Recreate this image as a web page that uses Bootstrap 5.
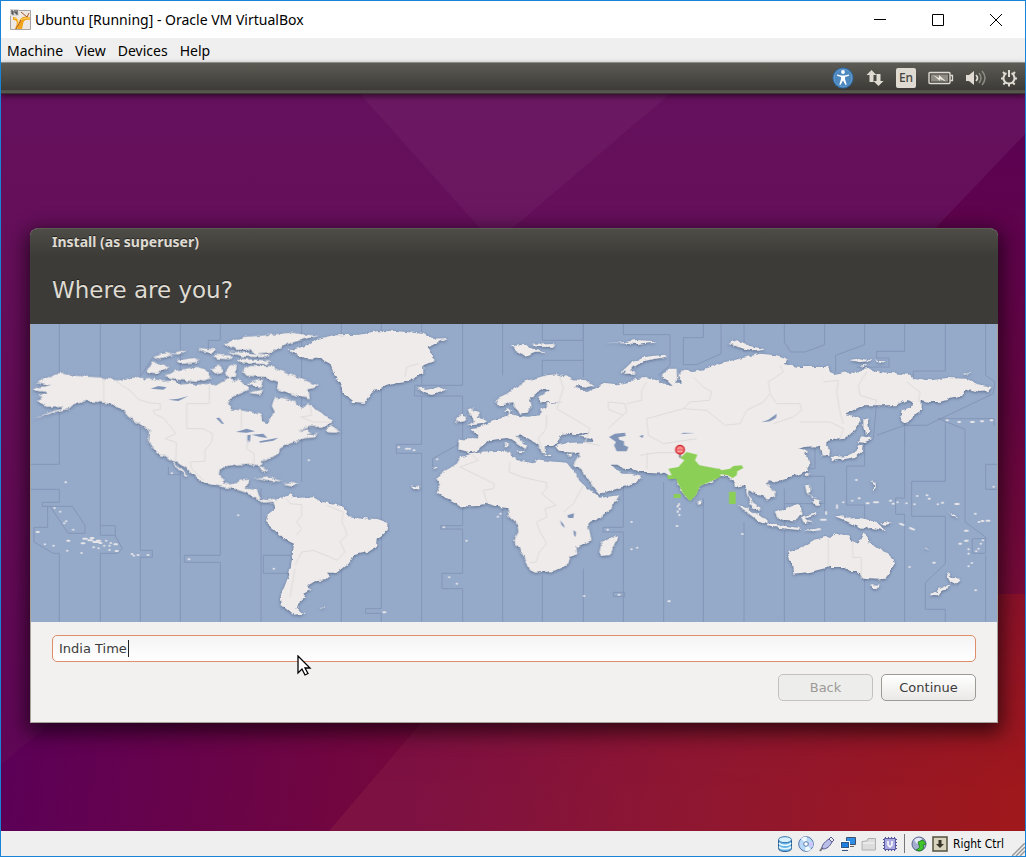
<!DOCTYPE html>
<html lang="en">
<head>
<meta charset="utf-8">
<meta name="viewport" content="width=device-width, initial-scale=1">
<title>Ubuntu [Running] - Oracle VM VirtualBox</title>
<link href="https://cdn.jsdelivr.net/npm/bootstrap@5.3.0/dist/css/bootstrap.min.css" rel="stylesheet">
<style>
  body { font-family: "Noto Sans", sans-serif; font-size: 14px; color: #000; border: 1px solid #1883d7; background: #efefef; }
  svg { display: block; flex: none; }
  .win-title { height: 37px; background: #fff; padding-left: 9px; }
  .win-title button { width: 58px; height: 36px; padding: 0; border: 0; background: none; display: flex; align-items: center; justify-content: center; color: #000; }
  .win-menu { height: 25px; border-bottom: 1px solid #a0a0a0; padding-left: 6px; gap: 12px; }
  .win-menu a { color: #000; text-decoration: none; }
  .panel { height: 31px; background: linear-gradient(#5c5b54, #3c3b37 90%, #56554e 92%); border-bottom: 1px solid #38362f; padding: 0 7px; gap: 12px; position: relative; box-shadow: 0 2px 6px rgba(0,0,0,.6); }
  .panel button { border: 0; padding: 0; background: none; }
  .panel .lang { width: 20px; height: 20px; border-radius: 2px; background: #dfdbd2; color: #45443f; font-size: 12px; line-height: 20px; font-weight: 500; }
  .desk { background: #65105a; padding: 134px 27px 24px 29px; position: relative; overflow: hidden; }
  .wall { position: absolute; inset: 0; width: 100%; height: 100%; }
  .installer { position: relative; border: 1px solid #a5a39a; border-top-color: #5c5b54; border-radius: 8px 8px 0 0; background: #f2f1f0; box-shadow: 0 6px 20px 4px rgba(0,0,0,.6); font-family: "DejaVu Sans", sans-serif; color: #3c3c3c; }
  .installer-head { height: 95px; margin: 0 -1px; padding: 0 22px; border-radius: 7px 7px 0 0; color: #dfdbd2; background: linear-gradient(#4d4c46, #3c3b37 28px); text-shadow: 0 -1px #22211e; }
  .installer-head h1 { font: 700 14px/26px "Noto Sans", sans-serif; margin: 0; }
  .installer-head h2 { font: 400 23px/30px "DejaVu Sans", sans-serif; margin: 20px 0 0; }
  .worldmap { width: 100%; height: auto; background: #95a9c9; }
  .installer-form { padding: 13px 21px 21px; }
  .tz { height: 27px; padding: 0 6px; border: 1px solid #df8d6b; border-radius: 5px; color: #3c3c3c; font-size: 13px; line-height: 25px; background: linear-gradient(#f4f4f4, #fff); caret-color: transparent; }
  .tz:focus { border-color: #df8d6b; box-shadow: none; color: #3c3c3c; }
  .caret { position: absolute; left: 76px; top: 5px; width: 1px; height: 17px; background: #222; }
  .pointer { position: absolute; left: 245px; top: 20px; }
  .gbtn { width: 95px; height: 27px; padding: 0; font-size: 13px; line-height: 25px; border: 1px solid #9b9a95; border-radius: 5px; color: #3c3c3c; background: linear-gradient(#fff, #eae9e7); }
  .gbtn:disabled { color: #9c9a96; background: #ededec; border-color: #c3c2c0; opacity: 1; }
  .win-status { height: 25px; padding-right: 21px; gap: 5px; font-family: "DejaVu Sans Condensed", "DejaVu Sans", sans-serif; font-size: 12px; position: relative; }
  .win-status .vr { margin: 3px 1px; opacity: .5; }
  .grip { position: absolute; right: 0; bottom: 0; }
</style>
</head>
<body class="d-flex flex-column min-vh-100">

<header class="win-title d-flex align-items-center">
  <svg width="21" height="21" viewBox="0 0 21 21"><path d="M.5 1.500h20v19H.5z" fill="#eee8e5" stroke="#a9a4a4"/><path d="M3 8c6 0 5 5 6 6 1-6 4-7 11-6v3c-8-1-6 3-8 9H5c3-7 2-9-2-9z" fill="#f2a41b"/><path d="M9 15c1-5 4-6 11-6M4 9c5 0 5 4 3 11" fill="none" stroke="#ffd76b"/><path d="M11 3l6 5 2-4M6 20l5-9" stroke="#a65723" fill="none"/><path d="M0 0h9v7H0z" fill="#d7d7d7"/><path d="M2 1v4h2M4 3H2M5 1v3h2M7 1v5" stroke="#333" fill="none"/></svg>
  <span class="ms-1 flex-grow-1 text-truncate">Ubuntu [Running] - Oracle VM VirtualBox</span>
  <button type="button" aria-label="Minimize"><svg width="12" height="12" viewBox="0 0 12 12"><path d="M0 5.500h12" stroke="#000"/></svg></button>
  <button type="button" aria-label="Maximize"><svg width="12" height="12" viewBox="0 0 12 12"><path d="M.5.500h11v11H.5z" stroke="#000" fill="none"/></svg></button>
  <button type="button" aria-label="Close"><svg width="12" height="12" viewBox="0 0 12 12"><path d="M0 0l12 12M12 0L0 12" stroke="#000"/></svg></button>
</header>

<nav class="win-menu d-flex align-items-center" aria-label="Machine window">
  <a href="#">Machine</a><a href="#">View</a><a href="#">Devices</a><a href="#">Help</a>
</nav>

<div class="panel d-flex align-items-center justify-content-end z-1">
  <button type="button" aria-label="Accessibility"><svg width="22" height="22" viewBox="0 0 22 22"><circle cx="11" cy="11" r="10.500" fill="#2f6ba6"/><circle cx="11" cy="11" r="9" fill="#4d88bf" stroke="#699fce"/><circle cx="11" cy="5" r="1.900" fill="#fff"/><path d="M5 7.500l4.500 1h3l4.500-1v1.300l-4 1.200V12l1.700 5.500-1.200.5L11 13.500 8.500 18l-1.200-.5L9 12v-2L5 8.800z" fill="#fff"/></svg></button>
  <button type="button" aria-label="Network"><svg width="18" height="18" viewBox="0 0 18 18" fill="#dfdbd2"><path d="M5.500 1l5 5H7.500v7h-4V6H.5zM12.500 17l-5-5h3V5h4v7h3z"/></svg></button>
  <button type="button" class="lang">En</button>
  <button type="button" aria-label="Battery"><svg width="26" height="14" viewBox="0 0 26 14"><rect x="1" y="1.500" width="21" height="11" rx="1" fill="none" stroke="#dfdbd2" stroke-width="1.400"/><path d="M3 3.500h17v7H3z" fill="#8e8c85"/><path d="M22.500 4.500h2v5h-2" fill="none" stroke="#dfdbd2" stroke-width="1.300"/><path d="M5 4l6 3V4l7 6.500-6-2.500v2z" fill="#eeeae0"/></svg></button>
  <button type="button" aria-label="Sound"><svg width="22" height="18" viewBox="0 0 22 18"><path d="M0 6h3l5-4v14l-5-4H0z" fill="#dfdbd2"/><path d="M10 6q3 3 0 6" fill="none" stroke="#dfdbd2" stroke-width="1.700"/><path d="M13 4q4 5 0 10M16 2q6 7 0 14" fill="none" stroke="#8e8c85" stroke-width="1.500"/></svg></button>
  <button type="button" aria-label="Session"><svg width="18" height="18" viewBox="0 0 18 18" fill="none" stroke="#dfdbd2" stroke-width="2"><path d="M6.500 4.200a5.500 5.500 0 1 0 5 0"/><path d="M9 1v7M3 3l2 2M15 3l-2 2M1 9.500h3M17 9.500h-3M3.300 15.500l2-2M14.700 15.500l-2-2M9 17.500V14.500"/></svg></button>
</div>

<main class="desk flex-grow-1">
  <svg class="wall" viewBox="0 0 1024 737" preserveAspectRatio="none" aria-hidden="true">
    <defs>
      <linearGradient id="w1" x1="0" y1="0" x2="0" y2="1"><stop offset="0" stop-color="#66115d"/><stop offset=".5" stop-color="#640b56"/><stop offset="1" stop-color="#5f0556"/></linearGradient>
      <linearGradient id="w2" gradientUnits="userSpaceOnUse" x1="0" y1="600" x2="1024" y2="737"><stop offset="0" stop-color="#5b0058"/><stop offset=".35" stop-color="#72063f"/><stop offset=".7" stop-color="#8b1030"/><stop offset="1" stop-color="#a0181a"/></linearGradient>
      <linearGradient id="w3" x1="0" y1="0" x2="0" y2="1"><stop offset="0" stop-color="#5b0252"/><stop offset=".4" stop-color="#640540"/><stop offset="1" stop-color="#8c122b"/></linearGradient>
      <linearGradient id="w4" gradientUnits="userSpaceOnUse" x1="420" y1="640" x2="1024" y2="737"><stop offset="0" stop-color="#7d1142"/><stop offset=".5" stop-color="#90172f"/><stop offset="1" stop-color="#9f181b"/></linearGradient>
      <linearGradient id="fade" x1="0" y1="0" x2="0" y2="1"><stop offset=".4" stop-color="#000"/><stop offset=".95" stop-color="#fff"/></linearGradient>
      <mask id="low"><path d="M0 0h1024v737H0z" fill="url(#fade)"/></mask>
    </defs>
    <path d="M0 0h1024v737H0z" fill="url(#w1)"/>
    <path d="M359 0h310L493 150z" fill="#fff" opacity=".035"/>
    <path d="M1024 40v697H700V380z" fill="url(#w3)"/>
    <path d="M0 671L320 400h380v337H0z" fill="url(#w2)"/>
    <path d="M328 737L530 500h494v237z" fill="url(#w4)" mask="url(#low)"/>
  </svg>

  <section class="installer">
    <header class="installer-head">
      <h1>Install (as superuser)</h1>
      <h2>Where are you?</h2>
    </header>

    <svg class="worldmap" viewBox="3 6 2898 894" role="img" aria-label="World time zone map">
      <defs>
        <filter id="coast" filterUnits="userSpaceOnUse" x="3" y="6" width="2898" height="894" color-interpolation-filters="sRGB">
          <feTurbulence type="fractalNoise" baseFrequency=".05" numOctaves="3" seed="4" result="n"/>
          <feDisplacementMap in="SourceGraphic" in2="n" scale="14" xChannelSelector="R" yChannelSelector="G" result="d"/>
          <feDropShadow in="d" dx="0" dy="3" stdDeviation="5" flood-color="#3f5070" flood-opacity=".65"/>
        </filter>
      </defs>
      <!-- time zone boundaries -->
      <g fill="none" stroke="#8496b8" stroke-width="3">
        <path d="M88 6V427H3M3 502H88V541H37V553H127L165 610V634H115L60 553M53 553V616H12V660L70 694H88V900M211 6V611H256V642L277 680 264 694H211V900M211 611V640H256M331 160V6M331 163L370 105M331 170V685H367V706H331V900M451 6V900M415 434V458H451M571 6V55H535V90M571 480V700H463V721H571V900M693 500V900M700 700H790M700 700V754H780M815 6V480M934 6V80M934 190V900M1054 6V30M1054 200V860H1007V874H1054V900"/>
        <path d="M1175 6V190H1154V222H1175V367H1099V394H1175V900M1298 6V190H1175M1175 222H1298V350M1298 360L1208 410V440M1298 550V611H1232V621H1298V754H1236V800H1298V900M1418 6V160M1418 560V900M1537 6V55H1660V6M1537 160V115H1660M1660 6V165M1537 760V900M1660 740V900M1780 6V38H1920V130L1885 160M1780 480V616H1719V630H1780V900M1780 811H1750V824H1784V811"/>
        <path d="M2020 6V47H1960V128H2000L2073 95V6M1901 480V900M2020 530V900M2142 6V90M2142 600V900M2263 6V60L2282 90H2325L2384 68V6M2263 500V900M2384 640V900M2504 6V68L2417 100V150M2504 770V900M2624 6V88H2540V108H2577V135H2480M2624 260V370M2540 340L2624 310H2690L2890 215 2895 180 2867 160V6M2746 6V147H2650V165M2504 290V432H2450V549H2504V590M2540 240L2530 350 2490 380M2725 290H2892V312M2725 290L2805 322V600L2867 645V694H2827V650H2867M2746 300V478H2645V583H2746V725L2686 782V862H2746V900M2624 330V528H2597V577H2624V900M2901 427H2867V502H2901M2867 700V900M2384 580V463H2320M2355 370V440H2340M2384 480V545H2263"/>
      </g>
      <g filter="url(#coast)" fill="#eeebea">
        <!-- North America -->
        <path d="M8 203L20 197 62 190 20 180 60 165 70 158 100 155 130 161 210 166 262 175 290 170 332 164 345 172 370 170 400 178 430 175 445 185 475 182 500 188 530 186 560 190 575 182 595 168 612 180 625 172 640 185 655 195 650 205 620 218 600 232 595 248 605 262 635 265 660 270 692 278 698 298 715 303 722 285 735 272 725 252 735 228 760 228 795 240 820 258 835 243 860 265 885 280 908 292 905 305 875 315 840 315 800 328 830 322 842 330 832 338 865 336 850 346 820 350 800 360 770 368 750 380 745 395 720 410 695 418 690 430 712 445 706 453 695 445 686 430 660 426 620 428 590 432 572 440 570 460 580 480 600 487 620 482 630 475 658 472 650 485 645 500 680 503 690 528 710 535 730 530 750 540 740 560 730 540 700 542 680 528 640 510 610 500 575 495 540 488 510 480 505 470 470 440 440 418 430 420 450 440 475 462 465 460 440 438 425 418 410 405 385 397 365 378 357 360 360 325 340 315 320 303 295 285 275 262 255 250 225 243 170 237 150 243 130 248 115 262 90 265 60 275 5 290 85 262 100 252 50 255 20 235 40 225 25 222 50 210 12 206Z"/>
        <path d="M350 150L365 122 400 125 418 135 380 155ZM370 105L410 92 425 100 380 112ZM415 95L475 83 450 97ZM400 165L440 145 500 135 520 140 530 150 545 170 500 180 430 172ZM440 115L490 108 508 120 455 126ZM505 78L560 82 545 94 515 86ZM550 98L610 100 600 112 560 110ZM540 140L570 130 580 150 555 154ZM585 155L600 125 620 130 618 165 590 168ZM620 110L720 115 715 127 640 124ZM580 65L640 45 700 40 780 32 865 42 810 55 760 70 730 90 680 95 660 82 620 84ZM590 88L650 92 720 98 712 106 640 104ZM635 145L660 132 720 132 760 150 810 168 865 192 835 203 840 232 790 218 740 200 745 180 700 165 650 162ZM655 212L700 202 690 218ZM650 185L700 170 690 200ZM885 320L905 310 932 330 895 328Z"/>
        <path d="M675 467L710 463 760 478 720 477ZM760 485L785 480 805 485 785 491Z"/>
        <!-- Greenland and South America -->
        <g transform="translate(660)">
          <path d="M112 85L150 78 190 60 205 50 250 40 330 38 380 28 440 27 520 35 545 50 595 48 560 62 530 75 550 100 550 118 520 130 520 155 470 180 430 185 370 205 345 243 310 240 280 215 265 180 250 150 240 125 215 112 165 108Z"/>
          <path d="M75 540L90 528 120 515 130 528 190 526 215 540 255 545 280 555 295 572 290 582 340 588 385 592 415 603 415 618 395 640 380 650 378 675 355 690 310 700 300 720 260 752 228 752 240 765 230 775 195 778 175 790 180 805 160 815 168 825 145 845 140 860 168 875 130 878 95 850 92 820 105 790 118 755 125 720 132 665 100 650 80 630 45 600 50 580 75 560Z"/>
          <path d="M207 855L230 853 220 858ZM480 490L515 495 505 506Z"/>
        </g>
        <!-- Europe, Arabia and Africa -->
        <g transform="translate(1140)">
          <path d="M147 352L205 352 208 342 180 322 205 318 225 308 265 290 290 285 300 270 283 270 290 262 305 264 302 275 325 282 355 284 390 280 392 262 410 255 410 243 458 242 395 240 388 225 420 205 400 202 370 218 358 235 362 255 350 272 328 275 318 262 305 240 290 248 262 250 258 230 290 215 320 195 345 178 380 168 410 160 440 157 465 163 490 172 530 175 550 190 530 197 495 192 510 205 535 210 570 192 580 185 620 190 650 180 690 178 750 170V450H690L660 440 640 440 622 428 605 428 620 445 640 455 665 455 695 465 680 480 640 495 568 515 555 500 530 465 505 435 490 428 505 405 505 392 450 390 435 372 480 362 552 360 545 352 505 342 535 330 520 330 490 340 485 332 460 335 448 350 445 362 425 372 405 372 405 395 390 390 385 370 350 350 335 340 318 342 325 352 355 370 350 385 330 370 305 352 290 348 240 355 215 372 200 390 178 394 145 385Z"/>
          <path d="M170 398L205 392 250 390 300 388 305 405 340 418 375 425 380 412 420 418 470 422 485 440 500 460 520 490 540 510 565 520 570 527 628 520 605 560 570 585 540 600 535 610 545 655 500 675 502 697 480 705 470 730 430 748 375 752 360 745 345 710 312 655 325 630 322 605 295 580 292 558 265 555 230 545 190 553 155 553 130 540 100 525 80 510 92 485 82 470 100 450 140 425 150 408Z"/>
          <path d="M568 690L575 660 605 645 615 638 622 650 600 700 570 702ZM173 262L192 256 188 265 205 270 208 285 230 295 222 306 175 310 195 295 180 280ZM138 290L155 278 172 282 165 298 140 302ZM22 200L40 197 50 203 90 195 108 207 65 219 40 213ZM303 72L345 68 370 82 412 92 375 92 350 104 315 85ZM365 68L435 66 430 74 385 75ZM285 360h8v16h-8zM320 385h24l-2 5h-18zM400 398h25v4h-22zM468 398l20-4-6 8zM68 434h15l-5 6z"/>
        </g>
        <!-- Asia -->
        <g transform="translate(1710)">
          <path d="M100 172L140 168 180 180 200 192 215 190 185 160 200 140 230 140 232 170 225 185 245 185 235 160 245 145 275 150 310 145 350 125 400 115 440 105 480 95 530 100 565 112 555 130 600 135 660 135V372L620 374 595 380 625 390 612 395 630 420 620 445 600 455 545 472 530 480 510 475 498 485 525 510 525 522 500 533 490 520 465 515 450 505 445 520 460 545 485 560 480 570 455 555 440 515 432 490 405 495 400 480 380 465 360 460 340 478 300 492 290 515 270 537 250 515 232 480 230 470 205 470 205 458 190 452 110 448Z"/>
          <path d="M62 152L80 145 75 158 105 158 92 142 130 118 200 104 195 98 130 105 90 125ZM385 62L415 55 450 72 495 82 470 88 420 78ZM12 60L60 62 110 54 170 58 110 66 60 64ZM290 535L300 532 306 545 295 549ZM413 548L430 553 470 575 500 595 500 607 475 598 450 578ZM500 607L560 612 600 618 595 624 540 618 500 613ZM525 570L550 565 590 545 600 555 605 575 590 595 550 595 530 585ZM603 585L630 578 650 572 648 577 620 588 642 605 625 598 620 608 610 600ZM615 490L630 488 632 510 620 515ZM635 540L655 533 662 548 645 548ZM615 460L628 453 622 468ZM626 512L652 530 640 525ZM610 622L660 622 640 628Z"/>
        </g>
        <!-- Far East and Oceania -->
        <g transform="translate(2250)">
          <path d="M0 130L60 135 145 135 150 150 168 158 190 152 230 152 240 145 270 140 300 150 390 158 400 168 450 175 500 168 560 170 590 185 635 195 625 208 600 210 560 200 550 215 545 225 510 230 480 240 445 240 425 235 425 265 400 280 385 300 370 305 360 285 365 265 395 255 400 240 380 235 345 250 250 250 220 265 198 275 240 290 242 300 225 325 195 350 150 355 138 365 150 385 148 402 125 400 120 375 85 370 55 378 85 390 70 395 88 420 80 445 50 460 0 470Z"/>
          <path d="M250 290L262 285 268 325 255 340 250 315ZM232 360L248 343 278 350 250 362ZM235 370L248 368 245 390 225 405 155 418 155 405 200 402 228 388ZM212 115L235 108 280 116 240 120ZM238 130h25l-10 6zM283 116l38 2-20 5zM545 155l30-2-20 5z"/>
          <path d="M22 690L60 680 100 655 135 645 150 648 165 635 208 640 205 652 235 665 250 632 262 640 270 665 310 685 340 710 345 725 335 745 315 770 290 773 250 770 230 750 210 750 190 735 150 735 90 750 40 755 35 725ZM272 787L300 788 288 803 278 798ZM165 583L190 580 195 590 240 587 290 600 318 628 280 618 245 620 215 605 190 593ZM500 752L520 768 543 770 525 788 510 780ZM510 787L500 800 470 820 447 820 480 800ZM302 605L325 600 338 602 320 608ZM100 530L122 535 118 546 105 542ZM80 512L100 522 88 518ZM498 562L512 575 535 588 520 586ZM430 678L452 687 440 684ZM272 475L283 480 285 495 278 508 280 492Z"/>
        </g>
      </g>
      <!-- small islands -->
      <g fill="none" stroke="#e6e5e8" stroke-width="6" stroke-linecap="round">
        <path d="M73 558h1M90 569h1M108 598h1M102 604h1M129 623h1M20 630h6M44 667h1M70 671h1M112 656h6M111 686h1M154 693h1M155 664h8M160 650h10M175 655h12M182 648h8M190 660h14M200 656h10M208 663h6M190 676h2M205 679h1M222 671h1M228 656h1M238 684h1M238 671h1M242 663h1M253 667h8M257 687h6M305 696h2M311 701h1M323 699h2M353 699h2M476 712h2M106 481h2M425 454h1M624 580h1M836 415h1M731 740h1"/>
        <path d="M1105 376h2M1128 380h4M1138 380h2M1151 385h2M1221 412h1M1241 616h1M1309 656h1M1257 766h1M1280 785h1M1411 575h1M1403 584h1M1804 600h1M1732 623h2M1804 682h1M1821 677h1M1766 818h2M1662 822h1M1947 546v2M1943 552v2M1949 560v2M1943 568v2M1948 578v2M1940 612h2M2136 636h2M1915 838h4M1060 871h6"/>
        <path d="M2750 295h3M2785 300h5M2823 300h8M2853 298h6M2882 295h5M2478 474h2M2439 541h1M2466 536h1M2486 529h3M2510 544h6M2532 541h12M2580 536h3M2588 545h3M2602 541h1M2629 544h1M2653 547h1M2661 522h1M2690 520h2M2696 530h3M2723 547h1M2736 542h3M2776 546h10M2835 575h2M2846 600h2M2855 597h5M2870 596h8M2805 626h8M2788 665h5M2805 656h8M2815 682h1M2815 695h1M2858 655h1M2852 665h1M2845 680h1M2838 688h1M2825 723h1M2815 733h1M2710 722h4M2836 805h2M2638 735h1M2890 494h1M2421 550v8M2388 570v6M2373 593h14M2610 605l10 4M2640 618l12 5M2350 625l20-3"/>
      </g>
      <!-- lakes and inland seas -->
      <g fill="#8094b8">
        <path d="M362 200L385 192 410 196 400 203ZM415 233L445 230 475 222 445 237ZM558 288L568 287 582 306 575 305ZM618 330L650 320 675 328 650 332ZM652 340L662 338 660 358 652 362ZM665 338L700 335 712 348 690 345ZM688 358L745 347 730 356 690 362Z"/>
        <path d="M1737 345L1755 335 1785 332 1787 342 1765 346 1768 353 1782 358 1782 370 1795 375 1790 388 1760 388 1752 370 1758 360ZM1612 580L1632 574 1630 588 1615 588ZM1590 595L1595 610 1605 618 1600 606ZM1630 625L1638 630 1637 645 1632 640ZM1828 343L1840 338 1838 348ZM1950 338L1960 332 1995 333 1955 336ZM2194 301L2215 293 2240 275 2238 288 2220 298Z"/>
      </g>
      <g fill="none" stroke="#dedbda" stroke-width="3" stroke-linejoin="round">
        <path d="M221 168V243M258 177L275 190 300 205 325 232 360 243 391 245V262L370 265 372 275 400 288 425 318 437 335 405 350 440 362 436 420M538 187V245H470V320L520 320 548 335 545 360 525 385V418L480 420 485 440 520 475M634 265V320M655 355L650 380 672 395V425"/>
        <path d="M770 530L780 545 815 548 815 580 800 600 815 620 800 640M795 730L815 690 850 685 900 705 920 715 945 690 930 660 950 640 948 625 935 600 940 570 890 550M780 825L795 740M840 250L845 280 812 285 850 300 905 300M1125 165L1130 135 1165 125"/>
        <path d="M1325 398L1345 415 1290 435 1393 485 1390 500 1360 505 1372 545M1440 420L1437 450 1475 465 1550 482 1550 500 1535 515 1578 550 1545 560 1550 585 1520 600 1530 630 1550 665 1528 690 1518 720 1500 722M1660 490L1630 545 1600 570M1550 280L1548 320 1525 350 1540 390M1590 165L1600 200 1580 260 1640 295 1680 320 1665 362 1710 370M1960 375V392H1880L1830 400M1735 320L1755 300 1790 270 1785 245 1735 240V262L1780 280M1850 180L1835 205V235L1790 245M1990 165L2020 195 2045 210 2038 235 1980 240 1960 260 1850 290 1855 340 1900 365 2000 350M1960 260L2030 265 2085 310 2130 305 2150 265 2200 240 2220 215 2215 180 2260 150 2250 130M2220 215L2240 245 2310 245 2315 265 2290 285 2230 305M2310 300L2400 300 2440 320 2430 350M2380 180L2425 175 2420 210 2430 270 2440 305M2510 150L2485 190 2490 220 2540 235 2535 250M2630 180L2670 210 2665 240M2395 650V735M2468 660V706H2494V770M1850 440L1852 392M2000 430L2065 440"/>
      </g>
      <!-- selected zone -->
      <g fill="#8ccf56">
        <path d="M1950 408L1970 390 2002 398 1995 415 2008 430 2070 442 2072 464 2060 470 2010 492 1998 520 1980 538 1960 515 1942 480 1938 470 1915 472 1910 460 1925 460 1915 440 1945 435 1963 415ZM2065 438L2075 445 2100 440 2110 432 2135 430 2140 438 2122 448 2120 460 2108 468 2093 460 2068 456Z"/>
        <path d="M1931 516h21v12h-21zM2097 509h20v37h-20z"/>
      </g>
      <path d="M1947 392h6v15h-6z" fill="#888"/><circle cx="1950" cy="383" r="13" fill="#f07070" stroke="#d42c34" stroke-width="4"/><path d="M1943 380q7-7 14 0M1942 388h16" stroke="#ffb0b0" stroke-width="3" fill="none"/>
    </svg>

    <form class="installer-form" onsubmit="return false">
      <div class="position-relative mb-2 pb-1">
        <input class="tz form-control" type="text" value="India Time" aria-label="Time zone">
        <span class="caret"></span>
        <svg class="pointer" width="15" height="22" viewBox="0 0 15 22"><path d="M1 1v17l4-4 3 6 3-1.500-3-5.500h5z" fill="#fff" stroke="#000" stroke-width="1.300"/></svg>
      </div>
      <div class="d-flex justify-content-end gap-2">
        <button class="gbtn" type="button" disabled>Back</button>
        <button class="gbtn" type="submit">Continue</button>
      </div>
    </form>
  </section>
</main>

<footer class="win-status d-flex align-items-center justify-content-end">
  <svg width="16" height="16" viewBox="0 0 16 16"><path d="M1.500 4v8.500c0 4 13 4 13 0V4" fill="#67b5e6" stroke="#285c93"/><ellipse cx="8" cy="3.700" rx="6.500" ry="3" fill="#d6f0ff" stroke="#3673aa"/><path d="M2 7c2 3 10 3 12 0M2 10.500c2 3 10 3 12 0" fill="none" stroke="#e6f7ff" stroke-width="1.500"/></svg>
  <svg width="16" height="16" viewBox="0 0 16 16"><circle cx="8" cy="8" r="7.300" fill="#b9d7f6" stroke="#5274ad"/><path d="M8 8L3 2.500A7 7 0 0 1 9 1zM8 8l5 5.500a7 7 0 0 1-6 1.300z" fill="#eefaff"/><path d="M8 8l7-2v5z" fill="#cfc5ff"/><circle cx="8" cy="8" r="2.300" fill="#fff" stroke="#587cad"/></svg>
  <svg width="16" height="16" viewBox="0 0 16 16"><path d="M1 15l3-4" stroke="#777" stroke-width="2"/><path d="M3 12c0-4 4-7 7-9l3 3c-2 4-5 7-9 7z" fill="#b9bde8" stroke="#55598d"/><path d="M10 3l2-2 3 3-2 2z" fill="#eee" stroke="#55598d"/></svg>
  <svg width="16" height="16" viewBox="0 0 16 16"><path d="M6.500 1.500h9v7h-9z" fill="#2f8ee5" stroke="#40506b"/><path d="M9 10.500h5" stroke="#666"/><path d="M.5 5.500h9v7h-9z" fill="#1d7fe0" stroke="#fff"/><path d="M1.500 6.500h7v5h-7zM2 14.500h6" fill="none" stroke="#36547c"/></svg>
  <svg width="16" height="16" viewBox="0 0 16 16"><path d="M1 14V5.500L6 5l1-2.500h7.500V14z" fill="#dcdcdc" stroke="#b0b0b0"/><path d="M2 7h11" stroke="#f8f8f8"/></svg>
  <svg width="16" height="16" viewBox="0 0 16 16"><path d="M3.500 1v14M6.500 1v14M9.500 1v14M12.500 1v14M1 3.500h14M1 6.500h14M1 9.500h14M1 12.500h14" stroke="#4a4a93"/><path d="M2.500 2.500h11v11h-11z" fill="#a9a8df" stroke="#5a5aa5"/><path d="M6 5v4l2 2 2-2V5" fill="none" stroke="#fff" stroke-width="1.500"/></svg>
  <div class="vr"></div>
  <svg width="16" height="16" viewBox="0 0 16 16"><circle cx="8" cy="8" r="7" fill="#a4add0" stroke="#59648b"/><path d="M3 4q4-4 8-1L6 8z" fill="#e3e7f8"/><path d="M7 6l5-2 3 4-3 1q2 4-3 6l-4-1q5-2 3-5z" fill="#42c52d" stroke="#187717" stroke-width=".8"/></svg>
  <svg width="16" height="16" viewBox="0 0 16 16"><path d="M1 1h14v14H1z" fill="#d9d3bd" stroke="#56513f" stroke-width="1.500"/><path d="M6.500 4h3v4H12l-4 4-4-4h2.500z" fill="#37342a"/></svg>
  <span>Right Ctrl</span>
  <svg class="grip" width="13" height="13" viewBox="0 0 13 13"><path d="M0 13L13 0M4 13l9-9M8 13l5-5" stroke="#999" stroke-width="1.500"/></svg>
</footer>
<script src="https://cdn.jsdelivr.net/npm/bootstrap@5.3.0/dist/js/bootstrap.bundle.min.js"></script>
</body>
</html>
